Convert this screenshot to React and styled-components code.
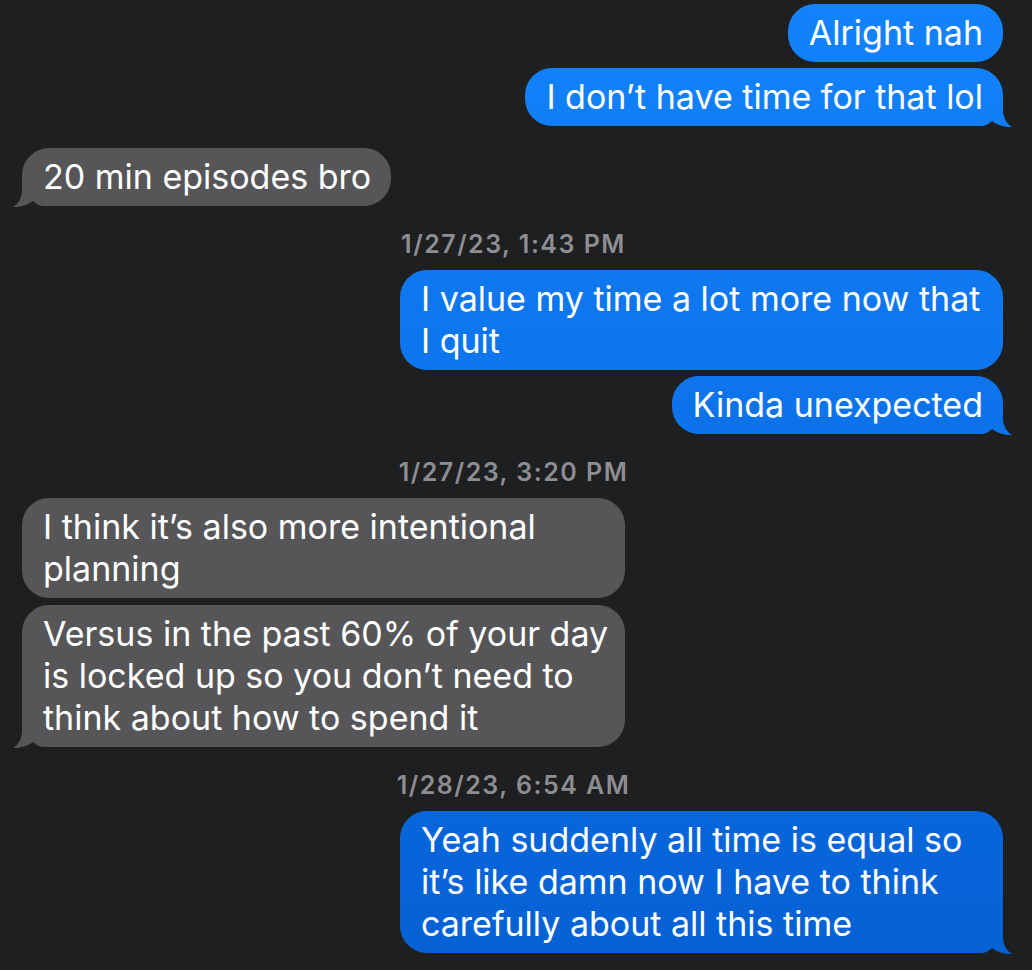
import React from "react";
import styled, {createGlobalStyle, css} from "styled-components";

const BG = "#1e1f21";
const GREY = "#565658";

const GlobalStyle = createGlobalStyle`
    html, body {
        margin: 0;
        padding: 0;
        background: ${BG};
    }
    body {
        font-family: Inter, "Noto Sans", sans-serif;
        -webkit-font-smoothing: antialiased;
    }
`;

const Thread = styled.div`
    display: flex;
    flex-direction: column;
    padding: 4px 29px 20px 22px;
    min-height: 970px;
    box-sizing: border-box;
`;

const Row = styled.div`
    display: flex;
    justify-content: ${(p) => (p.$mine ? "flex-end" : "flex-start")};
    margin-top: ${(p) => p.$gap}px;
`;

// tail drawn on a pseudo element, cut out with a clip path so it keeps the bubble's fixed gradient
const TAIL_RIGHT = "path('M0 29 L0 0 L30 0 L30 13 C30 21 34 27 39 30 C33 30.5 24 28 19 24 C16 27 12 29 8 29 Z')";
const TAIL_LEFT = "path('M39 29 L39 0 L9 0 L9 13 C9 21 5 27 0 30 C6 30.5 15 28 20 24 C23 27 27 29 31 29 Z')";

const tail = css`
    &::before {
        content: "";
        position: absolute;
        bottom: -1px;
        width: 39px;
        height: 30px;
        background: inherit;
        ${(p) => (p.$mine ? css`right: -9px; clip-path: ${TAIL_RIGHT};` : css`left: -9px; clip-path: ${TAIL_LEFT};`)}
    }
`;

const Bubble = styled.div`
    position: relative;
    box-sizing: border-box;
    width: ${(p) => (p.$wide ? "603px" : "auto")};
    padding: 8px 20px 8px 21px;
    border-radius: 27px;
    font-size: 34px;
    line-height: 42px;
    color: #ffffff;
    white-space: nowrap;
    background: ${(p) => (p.$mine ? "linear-gradient(180deg, #1383fb 0%, #0c72ea 45%, #0561d4 100%) fixed" : GREY)};
    ${(p) => p.$tail && tail}
`;

const Text = styled.span`
    position: relative;
`;

const Stamp = styled.div`
    text-align: center;
    margin: 24px 0 12px;
    padding-left: 2px;
    font-size: 25px;
    line-height: 28px;
    font-weight: 600;
    color: #8d8d92;
    letter-spacing: 1.5px;
`;

const items = [
    {mine: true, text: ["Alright nah"], gap: 0},
    {mine: true, text: ["I don\u2019t have time for that lol"], gap: 6, tail: true},
    {mine: false, text: ["20 min episodes bro"], gap: 22, tail: true},
    {stamp: "1/27/23, 1:43 PM"},
    {mine: true, text: ["I value my time a lot more now that", "I quit"], gap: 0},
    {mine: true, text: ["Kinda unexpected"], gap: 6, tail: true},
    {stamp: "1/27/23, 3:20 PM"},
    {mine: false, text: ["I think it\u2019s also more intentional", "planning"], gap: 0},
    {mine: false, text: ["Versus in the past 60% of your day", "is locked up so you don\u2019t need to", "think about how to spend it"], gap: 7, tail: true},
    {stamp: "1/28/23, 6:54 AM"},
    {mine: true, text: ["Yeah suddenly all time is equal so", "it\u2019s like damn now I have to think", "carefully about all this time"], gap: 0, tail: true},
];

const App = () => {
    return (
        <>
            <GlobalStyle/>
            <Thread>
                {
                    items.map((item, index) => item.stamp ? (
                        <Stamp key={index}>{item.stamp}</Stamp>
                    ) : (
                        <Row key={index} $mine={item.mine} $gap={item.gap}>
                            <Bubble $mine={item.mine} $tail={item.tail} $wide={item.text.length > 1}>
                                <Text>
                                    {item.text.map((line, i) => (
                                        <React.Fragment key={i}>
                                            {i > 0 && <br/>}
                                            {line}
                                        </React.Fragment>
                                    ))}
                                </Text>
                            </Bubble>
                        </Row>
                    ))
                }
            </Thread>
        </>
    );
};

export default App;
